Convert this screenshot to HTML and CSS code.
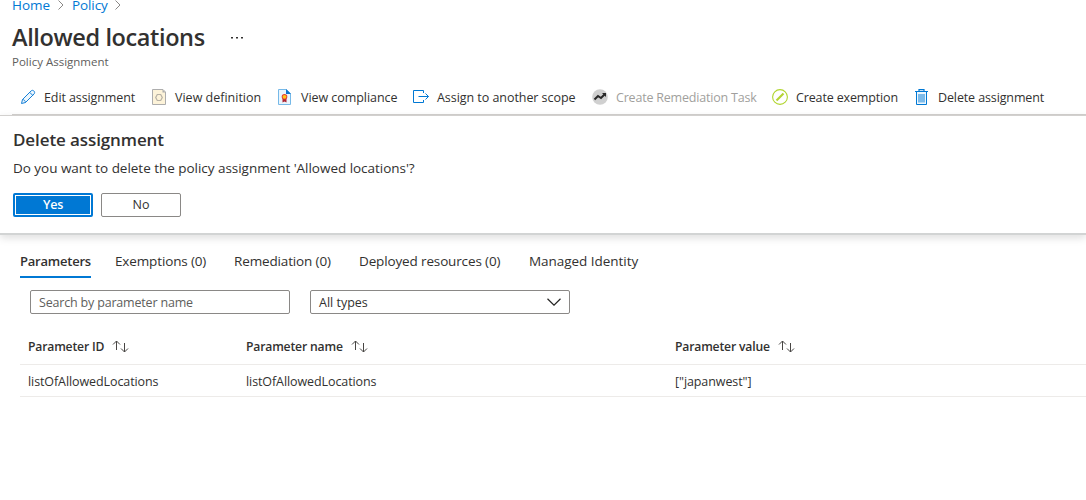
FILE: index.html
```html
<!DOCTYPE html>
<html lang="en">
<head>
<meta charset="utf-8">
<title>Allowed locations</title>
<link rel="stylesheet" href="styles.css">
</head>
<body>
<header class="header">
  <nav class="crumbs">
    <a class="crumb-home">Home</a>
    <svg class="crumb-sep" width="8" height="10" viewBox="0 0 8 10"><path d="M1.5 .5 6 5 1.5 9.5"/></svg>
    <a class="crumb-policy">Policy</a>
    <svg class="crumb-sep" width="8" height="10" viewBox="0 0 8 10"><path d="M1.5 .5 6 5 1.5 9.5"/></svg>
  </nav>
  <div class="title-row">
    <h1 class="title">Allowed locations</h1>
    <svg class="more" width="12" height="3" viewBox="0 0 12 3"><path d="M0 1h2v1.500H0zM5 1h2v1.500H5zM10 1h2v1.500h-2z"/></svg>
  </div>
  <div class="subtitle">Policy Assignment</div>
</header>

<div class="toolbar">
  <div class="tool tool-edit">
    <svg width="16" height="16" viewBox="0 0 16 16" fill="#eef7fd" stroke="#1580d8"><path d="M1.500 14.500 2.500 10.500 11 2C12 1 13.100 1.200 13.900 2 14.800 2.900 14.900 4 14 5L5.500 13.500ZM9.700 3.300 12.700 6.300M2.500 10.500C4 10.500 5.500 12 5.500 13.500"/></svg>
    <span>Edit assignment</span>
  </div>
  <div class="tool tool-definition">
    <svg width="16" height="16" viewBox="0 0 16 16"><path d="M1.500.5H12L14.500 3V15.500H1.500Z" fill="#fdf3d9" stroke="#adadad"/><path d="M11.500.5V3.500H14.500" fill="#adadad"/><path d="m6.300 5.500h3.400l1.600 3-1.600 3H6.300l-1.600-3z" fill="none" stroke="#b7b1a5" stroke-width="1.200"/></svg>
    <span>View definition</span>
  </div>
  <div class="tool tool-compliance">
    <svg width="16" height="16" viewBox="0 0 16 16"><path d="M1.500.5H9.500L13.500 4.500V15.500H1.500Z" fill="#eaf5fd" stroke="#76b9e8"/><path d="M9 0 14 5H9Z" fill="#0f75cd"/><path d="M5.500 9v4.500l2-1 2 1V9Z" fill="#ad2533"/><circle cx="7.500" cy="7.800" r="2.800" fill="#e33b31"/><circle cx="7.500" cy="7.800" r="1.900" fill="#ffc519"/></svg>
    <span>View compliance</span>
  </div>
  <div class="tool tool-assign">
    <svg width="16" height="16" viewBox="0 0 16 16" fill="none" stroke="#0078d4"><path d="M10.500 4V1.500H.5V13.500H10.500V11M5.500 7.500H15.500M12.500 4.500 15.500 7.500 12.500 10.500"/></svg>
    <span>Assign to another scope</span>
  </div>
  <div class="tool tool-remediation disabled">
    <svg width="16" height="16" viewBox="0 0 16 16"><circle cx="8" cy="8" r="7.800" fill="#d0d0d0"/><path d="M2.500 10.500 6 7 9 9 13 5" fill="none" stroke="#292929" stroke-width="2"/><path d="M10 4H14V8Z" fill="#292929"/></svg>
    <span>Create Remediation Task</span>
  </div>
  <div class="tool tool-exemption">
    <svg width="16" height="16" viewBox="0 0 16 16"><circle cx="8" cy="8" r="7.400" fill="#fff" stroke="#b1d52f" stroke-width="1.100"/><path d="M4.500 11.500 11.500 4.500" stroke="#b4d334" stroke-width="2.200"/></svg>
    <span>Create exemption</span>
  </div>
  <div class="tool tool-delete">
    <svg width="16" height="16" viewBox="0 0 16 16"><path d="M2.500 3V15.500H12.500V3" fill="#eef7fd" stroke="#0078d4"/><path d="M1 2.500H14M5 2V.6H10V2" fill="none" stroke="#0078d4" stroke-width="1.200"/><path d="M4 5H11V13.500H4Z" fill="#7dbbea"/></svg>
    <span>Delete assignment</span>
  </div>
</div>

<section class="confirm">
  <h2 class="confirm-title">Delete assignment</h2>
  <p class="confirm-text">Do you want to delete the policy assignment 'Allowed locations'?</p>
  <div class="buttons">
    <button class="btn primary">Yes</button>
    <button class="btn">No</button>
  </div>
</section>

<main class="content">
  <div class="tabs">
    <div class="tab tab-parameters active">Parameters</div>
    <div class="tab tab-exemptions">Exemptions (0)</div>
    <div class="tab tab-remediation">Remediation (0)</div>
    <div class="tab tab-deployed">Deployed resources (0)</div>
    <div class="tab tab-identity">Managed Identity</div>
  </div>
  <div class="filters">
    <div class="field search"><span>Search by parameter name</span></div>
    <div class="field select"><span>All types</span>
      <svg width="14" height="8" viewBox="0 0 14 8"><path d="M.5.8 7 7.200 13.500.8" fill="none" stroke="#252423" stroke-width="1.200"/></svg>
    </div>
  </div>
  <div class="table">
    <div class="row head">
      <div class="cell"><span>Parameter ID</span><svg class="sort" width="17" height="13" viewBox="0 0 17 13"><path d="M4.500 10V1M1 4.500 4.500 1 8 4.500M12.500 3V12M9 8.500 12.500 12 16 8.500"/></svg></div>
      <div class="cell"><span>Parameter name</span><svg class="sort" width="17" height="13" viewBox="0 0 17 13"><path d="M4.500 10V1M1 4.500 4.500 1 8 4.500M12.500 3V12M9 8.500 12.500 12 16 8.500"/></svg></div>
      <div class="cell"><span>Parameter value</span><svg class="sort" width="17" height="13" viewBox="0 0 17 13"><path d="M4.500 10V1M1 4.500 4.500 1 8 4.500M12.500 3V12M9 8.500 12.500 12 16 8.500"/></svg></div>
    </div>
    <div class="row">
      <div class="cell">listOfAllowedLocations</div>
      <div class="cell">listOfAllowedLocations</div>
      <div class="cell">["japanwest"]</div>
    </div>
  </div>
</main>
</body>
</html>
```
FILE: styles.css
```css
* { box-sizing: border-box; }
body { margin: 0; background: #fff; color: #323130; font: 12.5px/18px "Open Sans", "Noto Sans", sans-serif; height: 500px; overflow: hidden; }
h1, h2, p { margin: 0; }
span, h1, h2, p, a, .tab, .cell { white-space: nowrap; }
.header { display: flow-root; height: 80px; padding-left: 12px; }
.crumbs { display: flex; align-items: center; height: 18px; margin-top: -4px; color: #0078d4; font-size: 13.500px; }
.crumbs a { flex: none; }
.crumb-home { width: 45px; }
.crumb-policy { width: 42px; letter-spacing: -.1px; }
.crumb-sep { flex: none; margin-right: 7px; fill: none; stroke: #8a8886; }
.title-row { display: flex; align-items: center; height: 38px; margin-top: 4px; }
.title { width: 219px; font-size: 23.500px; line-height: 34px; font-weight: 600; letter-spacing: -.38px; }
.more { fill: #323130; }
.subtitle { font-size: 11.500px; line-height: 16px; margin-top: -2px; color: #605e5c; }
.toolbar { display: flex; height: 35px; margin-left: 12px; padding-left: 8px; border-bottom: 1px solid #d2d0ce; letter-spacing: -.05px; }
.tool { display: flex; align-items: center; gap: 8px; height: 34px; flex: none; }
.tool svg { flex: none; }
.tool span, .field span { padding-top: 2px; }
.tool-edit { width: 131px; letter-spacing: -.1px; }
.tool-definition { width: 126px; letter-spacing: 0; }
.tool-compliance { width: 136px; }
.tool-assign { width: 179px; }
.tool-remediation { width: 180px; letter-spacing: -.2px; }
.tool-exemption { width: 142px; letter-spacing: -.14px; }
.tool-delete { letter-spacing: -.12px; }
.disabled { color: #a19f9d; }
.confirm { height: 120px; padding: 12px 13px 0; border-top: 1px solid #d2d0ce; border-bottom: 2px solid #d2d4d4; box-shadow: 0 3px 8px rgba(0,0,0,.13); }
.confirm-title { font-size: 17px; line-height: 24px; font-weight: 600; letter-spacing: -.1px; }
.confirm-text { font-size: 13.500px; line-height: 20px; margin-top: 6px; letter-spacing: -.03px; }
.buttons { display: flex; gap: 8px; margin-top: 15px; }
.btn { width: 80px; height: 24px; padding: 0; border: 1px solid #8a8886; border-radius: 2px; background: #fff; color: #323130; font: inherit; }
.primary { border: 2px solid #0078d4; background: #0078d4; box-shadow: inset 0 0 0 1px #fff; color: #fff; font-weight: 600; letter-spacing: -.25px; }
.content { padding-left: 20px; }
.tabs { display: flex; height: 43px; padding-top: 9px; font-size: 13.500px; letter-spacing: -.14px; }
.tab { height: 34px; padding-top: 8px; flex: none; }
.tab-parameters { width: 71px; margin-right: 24px; }
.tab-exemptions { width: 119px; }
.tab-remediation { width: 125px; }
.tab-deployed { width: 170px; }
.tab-identity { letter-spacing: -.04px; }
.active { border-bottom: 2px solid #0078d4; font-size: 13px; font-weight: 600; letter-spacing: -.22px; }
.filters { display: flex; gap: 20px; padding: 12px 0 0 10px; }
.field { display: flex; align-items: center; justify-content: space-between; width: 260px; height: 24px; padding: 0 8px; border: 1px solid #8a8886; border-radius: 2px; }
.search { color: #605e5c; letter-spacing: -.18px; }
.table { margin-top: 14px; }
.row { display: grid; grid-template-columns: 218px 429px 1fr; height: 32px; padding: 3px 0 0 8px; align-items: center; border-bottom: 1px solid #edebe9; letter-spacing: -.09px; }
.head { height: 37px; padding-top: 1px; font-size: 12.200px; font-weight: 600; letter-spacing: -.18px; }
.cell { display: flex; align-items: center; }
.sort { margin-left: 8px; fill: none; stroke: #484644; }
```
